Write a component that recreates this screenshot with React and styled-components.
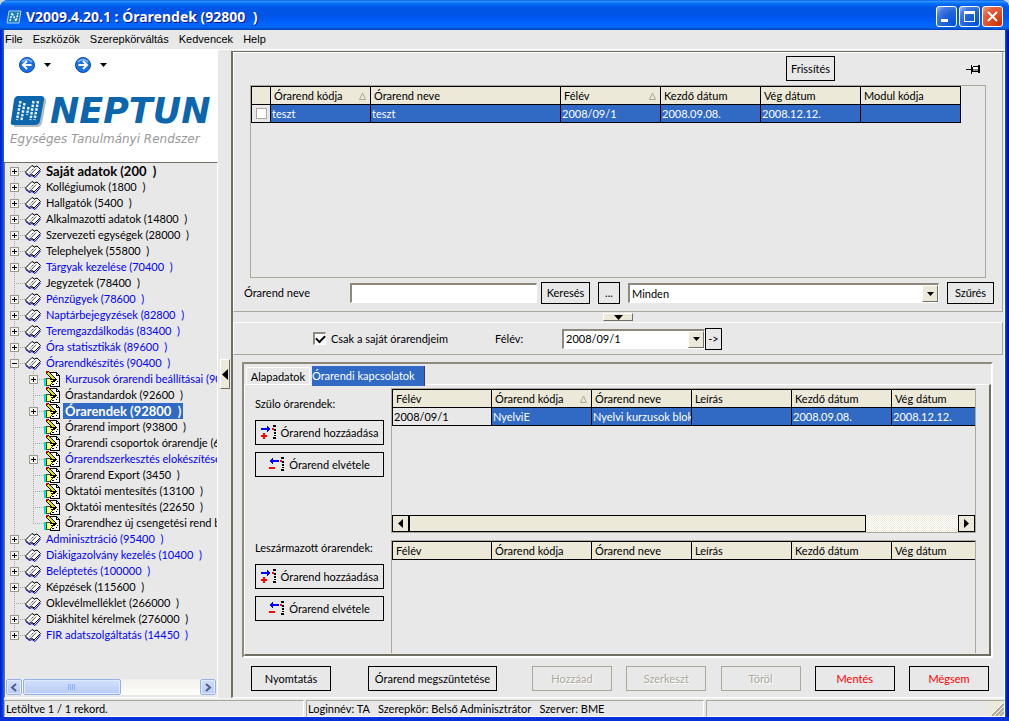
import styled, { createGlobalStyle, css } from "styled-components";

const GlobalStyle = createGlobalStyle`
    * {
        box-sizing: border-box;
    }
    body {
        margin: 0;
        background: #c9d6ea;
        color: #000;
        font-family: Lato, "Liberation Sans", sans-serif;
        font-size: 11px;
        line-height: 16px;
    }
    button, input, select {
        margin: 0;
        font: inherit;
        color: inherit;
    }
    svg {
        flex: none;
    }
`

const Window = styled.div`
    min-height: 100vh;
    display: flex;
    flex-direction: column;
    padding: 0 4px 4px;
    border-radius: 8px 8px 0 0;
    overflow: hidden;
    background: linear-gradient(90deg, #0019cf 0, #0831d9 2px, #0855dd 3px, #166aee 4px, #0855dd calc(100% - 4px), #0040dd calc(100% - 3px), #0019b0 calc(100% - 2px), #00138c 100%);
    box-shadow: inset 0 -4px 0 #0831d9;
`

const TitleBar = styled.header`
    height: 30px;
    margin: 0 -4px;
    padding: 3px 6px 0;
    display: flex;
    align-items: center;
    gap: 4px;
    background: linear-gradient(180deg, #0058ee 0, #3593ff 4%, #288eff 6%, #127dff 9%, #036ffc 12%, #0262ee 18%, #0057e5 24%, #0054e3 36%, #0055eb 56%, #005bf5 66%, #0066ff 80%, #0062ef 92%, #0040ab 100%);
    > h1 {
        flex: 1;
        margin: 0;
        color: #fff;
        font-family: "Noto Sans", sans-serif;
        font-size: 14px;
        line-height: 20px;
        font-weight: bold;
        text-shadow: 1px 1px 0 #0f1089;
        white-space: pre;
    }
`

const CaptionButtons = styled.div`
    display: flex;
    gap: 2px;
`

const CaptionButton = styled.button`
    width: 21px;
    height: 21px;
    padding: 0;
    display: flex;
    border: 1px solid #fff;
    border-radius: 3px;
    background: ${({ $close }) => $close
        ? "radial-gradient(circle at 90% 90%, #cc3300 0, #dc4a20 40%, #e0603c 70%, #eca08c 100%)"
        : "radial-gradient(circle at 90% 90%, #0054e9 0, #2263d5 50%, #4479e4 75%, #a3bbec 100%)"};
`

const MenuBar = styled.nav`
    height: 19px;
    padding: 0 1px 2px;
    display: flex;
    align-items: center;
    gap: 10px;
    background: #e8e8e8;
    font-family: "Liberation Sans", Arial, sans-serif;
    > a {
        color: #000;
        text-decoration: none;
    }
`

const Body = styled.div`
    flex: 1;
    display: flex;
    border-top: 1px solid #fff;
    background: #e8e8e8;
`

const Sidebar = styled.aside`
    width: 214px;
    flex: none;
    display: flex;
    flex-direction: column;
`

const Brand = styled.div`
    height: 112px;
    padding: 7px 6px 0 6px;
    background: #fff;
`

const NavButtons = styled.div`
    margin-left: 9px;
    display: flex;
    gap: 24px;
`

const NavButton = styled.button`
    padding: 0;
    display: flex;
    align-items: center;
    gap: 9px;
    border: none;
    background: none;
`

const Logo = styled.div`
    margin-top: 20px;
    display: flex;
    align-items: center;
    gap: 3px;
    height: 36px;
    color: #0b66ad;
    > strong {
        font-family: "DejaVu Sans", sans-serif;
        font-size: 35px;
        line-height: 36px;
        font-weight: bold;
        font-style: italic;
    }
`

const Slogan = styled.div`
    margin-top: 2px;
    color: #999;
    font-family: "DejaVu Sans", sans-serif;
    font-size: 12px;
    line-height: 16px;
    font-style: italic;
    white-space: nowrap;
`

const TreeBox = styled.div`
    flex: 1;
    display: flex;
    flex-direction: column;
    border: 1px solid #716f64;
    border-right-color: #fff;
    border-bottom-color: #fff;
    overflow: hidden;
`

const TreeList = styled.ul`
    flex: 1;
    margin: 0;
    padding: 0 0 0 1px;
    list-style: none;
    overflow: hidden;
`

const TreeRow = styled.li`
    height: 16px;
    display: flex;
    white-space: pre;
`

const dots = "#a8a8a0 0 1px, transparent 1px 2px"

const Guide = styled.span`
    flex: none;
    width: 19px;
    height: 16px;
    padding: 4px;
    background-repeat: no-repeat;
    background-image:
        repeating-linear-gradient(180deg, ${dots}),
        repeating-linear-gradient(90deg, ${dots});
    background-position: 8px ${({ $first }) => $first ? "8px" : "0"}, 8px 8px;
    background-size: 1px ${({ $last, $first }) => $last || $first ? "8px" : "16px"}, ${({ $pass }) => $pass ? "0" : "11px"} 1px;
`

const Expander = styled.button`
    display: flex;
    width: 9px;
    height: 9px;
    padding: 0;
    border: 1px solid #9d9a8c;
    background: #f4f4f0;
`

const TreeLabel = styled.span`
    margin-left: 3px;
    padding: 0 2px;
    color: ${({ $blue }) => $blue ? "#0000ff" : "#000"};
    ${({ $bold }) => $bold && css`
        font-size: 13px;
        font-weight: bold;
    `}
    ${({ $selected }) => $selected && css`
        color: #fff;
        background: #316ac5;
    `}
`

const XpScroll = styled.div`
    height: 16px;
    margin: 0 1px 2px;
    display: flex;
    gap: 1px;
    background: linear-gradient(180deg, #f3f1ec, #fefefb);
`

const XpScrollButton = styled.button`
    width: ${({ $wide }) => $wide ? "98px" : "16px"};
    margin-right: ${({ $wide }) => $wide ? "auto" : "0"};
    padding: 0;
    display: flex;
    align-items: center;
    justify-content: center;
    border: 1px solid #98b1e4;
    border-radius: 2px;
    background: linear-gradient(180deg, #d2dffd, #b9cbf6);
    box-shadow: inset 0 0 0 1px #e2eafe;
`

const SideSplitter = styled.div`
    width: 13px;
    flex: none;
    display: flex;
    align-items: center;
    justify-content: center;
`

const SplitterButton = styled.button`
    width: ${({ $down }) => $down ? "30px" : "10px"};
    height: ${({ $down }) => $down ? "8px" : "30px"};
    padding: 0;
    display: flex;
    align-items: center;
    justify-content: center;
    border: 1px solid #fff;
    border-right-color: #716f64;
    border-bottom-color: #716f64;
    background: #ece9d8;
`

const Main = styled.main`
    flex: 1;
    min-width: 0;
    margin-top: 1px;
    padding-right: 1px;
    display: flex;
    flex-direction: column;
    border: 1px solid #716f64;
    border-left-width: 2px;
    border-right-color: #fff;
    border-bottom-color: #fff;
`

const Panel = styled.section`
    border: 1px solid #fff;
    border-right-color: #aca899;
    border-bottom-color: #aca899;
`

const ListPanel = styled(Panel)`
    height: 260px;
    padding: 3px 8px 7px 10px;
    display: flex;
    flex-direction: column;
`

const PanelTools = styled.div`
    height: 25px;
    margin: 0 13px 4px 0;
    display: flex;
    justify-content: flex-end;
    align-items: center;
    gap: 131px;
`

const ListFrame = styled.div`
    flex: 1;
    margin: 0 8px 4px 6px;
    border: 1px solid #aca899;
    overflow: hidden;
`

const FlatButton = styled.button`
    width: ${({ $width }) => $width}px;
    height: ${({ $small }) => $small ? "22px" : "25px"};
    flex: none;
    padding: 0;
    display: flex;
    align-items: center;
    justify-content: center;
    gap: 4px;
    border: 1px solid #000;
    background: #e8e8e8;
    color: ${({ $red }) => $red ? "#ff0000" : "#000"};
    white-space: nowrap;
    &:disabled {
        border-color: #aca899;
        color: #aca899;
        text-shadow: 1px 1px 0 #fff;
    }
`

const PinButton = styled.button`
    padding: 0;
    display: flex;
    border: none;
    background: none;
`

const SearchRow = styled.div`
    display: flex;
    align-items: center;
    > label {
        width: 106px;
    }
    > button {
        margin-left: 8px;
    }
`

const TextInput = styled.input`
    width: 187px;
    height: 20px;
    margin-right: -4px;
    padding: 0 3px;
    border: 1px solid #fff;
    border-top: 2px solid #8d8a7d;
    border-left: 2px solid #8d8a7d;
    border-radius: 0;
    background: #fff;
`

const SelectFrame = styled.div`
    flex: ${({ $width }) => $width ? "none" : "1"};
    width: ${({ $width }) => $width ? `${$width}px` : "auto"};
    height: 20px;
    margin-left: ${({ $width }) => $width ? "0" : "8px"};
    display: flex;
    border: 1px solid #fff;
    border-top: 2px solid #8d8a7d;
    border-left: 2px solid #8d8a7d;
    background: #fff;
    > select {
        flex: 1;
        min-width: 0;
        padding: 0 2px;
        border: none;
        appearance: none;
        background: #fff;
    }
`

const SelectArrow = styled.span`
    width: 16px;
    display: flex;
    align-items: center;
    justify-content: center;
    border: 1px solid #fff;
    border-right-color: #716f64;
    border-bottom-color: #716f64;
    background: #ece9d8;
`

const DownSplitter = styled.div`
    height: 10px;
    display: flex;
    align-items: center;
    justify-content: center;
`

const FilterPanel = styled(Panel)`
    height: 33px;
    padding-left: 79px;
    display: flex;
    align-items: center;
`

const CheckLabel = styled.label`
    width: 182px;
    display: flex;
    align-items: center;
    gap: 5px;
    > input {
        width: 13px;
        height: 13px;
        display: grid;
        place-items: center;
        appearance: none;
        border: 1px solid #fff;
        border-top: 2px solid #8d8a7d;
        border-left: 2px solid #8d8a7d;
        background: #fff;
    }
    > input:checked::after {
        content: "";
        width: 7px;
        height: 4px;
        border-left: 2px solid #000;
        border-bottom: 2px solid #000;
        transform: translateY(-1px) rotate(-45deg);
    }
`

const FilterLabel = styled.label`
    width: 67px;
`

const TabBox = styled.section`
    flex: 1;
    margin: 7px 10px 0 9px;
    display: flex;
    flex-direction: column;
    border: 2px solid #fff;
    border-top-color: #8d8a7d;
    border-left-color: #8d8a7d;
`

const TabRow = styled.div`
    height: 20px;
    padding: 3px 0 0 2px;
    display: flex;
`

const Tab = styled.button`
    width: ${({ $width }) => $width}px;
    height: 17px;
    padding: 2px 0 0;
    border: 1px solid #fff;
    border-bottom: none;
    border-radius: 2px 2px 0 0;
    background: #e8e8e8;
    line-height: 14px;
    ${({ $active }) => $active && css`
        z-index: 1;
        height: 20px;
        margin: -1px 0 -2px 2px;
        padding: 0;
        border: none;
        border-right: 1px solid #404040;
        border-radius: 0;
        background: #316ac5;
        color: #fff;
        text-align: left;
    `}
`

const TabPage = styled.div`
    flex: 1;
    padding: 3px 13px 1px 10px;
    display: grid;
    grid-template-columns: 129px minmax(0, 1fr);
    grid-template-rows: 145px minmax(0, 1fr);
    gap: 7px;
    border: 1px solid #fff;
    border-right: 2px solid #716f64;
    border-bottom: 2px solid #716f64;
`

const SideActions = styled.div`
    padding-top: ${({ $top }) => $top ? "8px" : "0"};
    > h2 {
        margin: 0 0 8px;
        font-size: 11px;
        line-height: 16px;
        font-weight: normal;
    }
    > button + button {
        margin-top: 7px;
    }
`

const GridFrame = styled.div`
    display: flex;
    flex-direction: column;
    justify-content: space-between;
    border: 1px solid #aca899;
    border-bottom-width: ${({ $open }) => $open ? "0" : "1px"};
    overflow: hidden;
`

const DataTable = styled.table`
    width: ${({ $width }) => $width};
    table-layout: fixed;
    border-collapse: separate;
    border-spacing: 0;
    border-top: 1px solid #000;
    border-left: 1px solid #000;
    th, td {
        height: 18px;
        padding: 0 0 0 1px;
        border-right: 1px solid #000;
        border-bottom: 1px solid #000;
        line-height: 16px;
        font-weight: normal;
        text-align: left;
        white-space: nowrap;
        overflow: hidden;
    }
    th {
        padding-left: 3px;
        background: #ece9d8;
    }
    tr > :last-child {
        border-right-width: ${({ $cut }) => $cut ? "0" : "1px"};
    }
`

const HeadCell = styled.span`
    display: flex;
    justify-content: space-between;
    align-items: center;
    padding-right: 4px;
`

const Cell = styled.td`
    background: ${({ $selected }) => $selected ? "#316ac5" : "#e8e8e8"};
    color: ${({ $selected }) => $selected ? "#fff" : "#000"};
`

const RowCheck = styled.input`
    display: block;
    width: 11px;
    height: 11px;
    margin-left: 3px;
    appearance: none;
    border: 1px solid #aca899;
    background: #fff;
`

const FlatScroll = styled.div`
    height: 17px;
    display: flex;
    background: repeating-conic-gradient(#ece9d8 0 25%, #fff 0 50%) 0 0 / 2px 2px;
`

const FlatScrollButton = styled.button`
    width: 17px;
    padding: 0;
    display: flex;
    align-items: center;
    justify-content: center;
    border: 1px solid #000;
    background: #ece9d8;
`

const FlatThumb = styled.div`
    width: 457px;
    margin-right: auto;
    border: 1px solid #000;
    background: #ece9d8;
`

const Footer = styled.div`
    padding: 8px 14px 6px 18px;
    display: flex;
    gap: 37px;
`

const FooterGroup = styled.div`
    flex: 1;
    display: flex;
    justify-content: space-between;
    margin-left: -2px;
`

const StatusBar = styled.footer`
    height: 19px;
    padding-top: 1px;
    display: flex;
    gap: 2px;
    border-top: 1px solid #f4f4f4;
    background: #e8e8e8;
`

const StatusPart = styled.div`
    flex: ${({ $width }) => $width ? "none" : "1"};
    width: ${({ $width }) => $width}px;
    padding-left: 1px;
    display: flex;
    justify-content: ${({ $grip }) => $grip ? "flex-end" : "flex-start"};
    border: 1px solid #aca899;
    border-right-color: #fff;
    border-bottom-color: #fff;
    white-space: pre;
`

const Triangle = ({ dir, size = 4 }) => {
    const shapes = {
        down: `M0 0H${size * 2 - 1}L${size - 0.5} ${size}Z`,
        left: `M${size} 0V${size * 2 - 1}L0 ${size - 0.5}Z`,
        right: `M0 0V${size * 2 - 1}L${size} ${size - 0.5}Z`,
    };
    const flat = dir === "down";
    return <svg width={flat ? size * 2 - 1 : size} height={flat ? size : size * 2 - 1} aria-hidden="true">
        <path d={shapes[dir]} />
    </svg>;
};

const AppIcon = () => (
    <svg width="16" height="16" viewBox="0 0 16 16" aria-hidden="true">
        <path d="M3 2H15L13 14H1Z" fill="#1b7cc0" stroke="#a8d4f0" />
        <path d="M4 12L6 4L10 12L12 4" fill="none" stroke="#fff" strokeWidth="1.5" strokeDasharray="2 1" />
    </svg>
);

const LogoMark = () => (
    <svg width="37" height="32" viewBox="0 0 37 32" aria-hidden="true">
        <path d="M9 3H33Q37 3 36 7L32 28Q31 32 27 32H4Z" fill="#b8bcc0" />
        <path d="M8 1H31Q35 1 34 5L30 26Q29 30 25 30H3Q0 30 1 26L4 5Q5 1 8 1Z" fill="#0b66ad" />
        <g fill="none" stroke="#e4f1fa" strokeWidth="2.5" strokeDasharray="2.5 1.2">
            <path d="M10.5 6L7 25M14.5 8L11.5 25" />
            <path d="M18.5 12L17 20M23.5 6L20.5 25M28 6L24.5 25" />
        </g>
    </svg>
);

const RoundArrow = ({ forward }) => (
    <svg width="16" height="16" viewBox="0 0 16 16" aria-hidden="true">
        <circle cx="8" cy="8" r="7.5" fill="#1a70e8" stroke="#0a48a8" />
        <path d="M3 5Q8 0 13 5" fill="none" stroke="#6fb2f8" strokeWidth="2" />
        <path
            d={forward ? "M3.5 8H11.5M8 4L12 8L8 12" : "M12.5 8H4.5M8 4L4 8L8 12"}
            fill="none"
            stroke="#fff"
            strokeWidth="2"
        />
    </svg>
);

const BookIcon = () => (
    <svg width="16" height="16" viewBox="0 0 16 16" aria-hidden="true">
        <path d="M0.5 10.5L4.5 13.5L7 12.5L10 14.5L15.5 8" fill="none" stroke="#0000c0" />
        <path d="M0.5 9L7 2.5L9.5 4L12 3L15.5 6.5L9 13L6.5 11L4 12.5Z" fill="#fff" stroke="#000" />
        <path d="M9.5 4.5L4 10.5" fill="none" stroke="#000" strokeDasharray="1 1" />
        <path d="M11 5.5L6.5 10.5" fill="none" stroke="#555" />
    </svg>
);

const NoteIcon = () => (
    <svg width="16" height="16" viewBox="0 0 16 16" aria-hidden="true" shapeRendering="crispEdges">
        <path d="M6 1H12L15 4V15H6Z" fill="#fff" stroke="#000" />
        <path d="M12 1V4H15M8 13H10M12 12H13M11 8H13M13 10H14" fill="none" stroke="#000" />
        <path d="M0 7H2V15H0Z" fill="#00e0e0" />
        <path d="M2 7H6L9 9V11L6 14H2Z" fill="#ffff80" stroke="#4d4d00" />
        <path d="M3 1L12 10" stroke="#000" strokeWidth="4" />
        <path d="M3 1L11 9" stroke="#e8e000" strokeWidth="1.5" />
        <path d="M6 8H11V9H6ZM7 10H10V11H7Z" fill="#000" />
        <path d="M2 0H4V2H2Z" fill="#c00000" />
    </svg>
);

const MoveIcon = ({ remove }) => (
    <svg width="16" height="15" viewBox="0 0 16 15" aria-hidden="true" shapeRendering="crispEdges">
        <path d={remove ? "M0 4L4 1V3H10V5H4V7Z" : "M10 4L6 1V3H0V5H6V7Z"} fill="#0000ff" />
        <path d={remove ? "M0 10H6V12H0Z" : "M2 8H4V10H6V12H4V14H2V12H0V10H2Z"} fill="#ff0000" />
        <path d="M11 3H13V5H11Z" fill="#ff0000" />
        <path d="M12 0H15V2H12ZM13 4H15V6H13ZM13 7H15V9H13ZM13 10H15V11H13ZM12 12H15V14H12Z" />
    </svg>
);

const PinIcon = () => (
    <svg width="15" height="10" viewBox="0 0 15 10" aria-hidden="true" shapeRendering="crispEdges">
        <path d="M0 5H5V6H0ZM5 1H6V10H5ZM6 3H7V8H6ZM7 2H12V3H7ZM7 7H12V8H7ZM12 1H14V9H12Z" />
        <path d="M7 3H12V5H7Z" fill="#fff" />
        <path d="M7 5H12V7H7Z" fill="#888" />
    </svg>
);

const SortMark = () => (
    <svg width="7" height="8" viewBox="0 0 7 8" aria-hidden="true">
        <path d="M3.5 1L6.5 7.5H0.5Z" fill="none" stroke="#aca899" />
    </svg>
);

const GripIcon = () => (
    <svg width="15" height="15" viewBox="0 0 15 15" aria-hidden="true">
        <path d="M0 0H15V15H0Z" fill="#ece9d8" />
        <path d="M3 15L15 3M7 15L15 7M11 15L15 11" stroke="#aca899" strokeWidth="2" />
        <path d="M2 14L14 2M6 14L14 6" stroke="#fff" />
    </svg>
);

const tree = [
    { text: "Saját adatok (200  )", bold: true, first: true, box: "+" },
    { text: "Kollégiumok (1800  )", box: "+" },
    { text: "Hallgatók (5400  )", box: "+" },
    { text: "Alkalmazotti adatok (14800  )", box: "+" },
    { text: "Szervezeti egységek (28000  )", box: "+" },
    { text: "Telephelyek (55800  )", box: "+" },
    { text: "Tárgyak kezelése (70400  )", blue: true, box: "+" },
    { text: "Jegyzetek (78400  )" },
    { text: "Pénzügyek (78600  )", blue: true, box: "+" },
    { text: "Naptárbejegyzések (82800  )", blue: true, box: "+" },
    { text: "Teremgazdálkodás (83400  )", blue: true, box: "+" },
    { text: "Óra statisztikák (89600  )", blue: true, box: "+" },
    { text: "Órarendkészítés (90400  )", blue: true, box: "-" },
    { text: "Kurzusok órarendi beállításai (90", blue: true, child: true, box: "+" },
    { text: "Órastandardok (92600  )", child: true },
    { text: "Órarendek (92800  )", child: true, bold: true, selected: true, box: "+" },
    { text: "Órarend import (93800  )", child: true },
    { text: "Órarendi csoportok órarendje (65", child: true },
    { text: "Órarendszerkesztés elokészítése", blue: true, child: true, box: "+" },
    { text: "Órarend Export (3450  )", child: true },
    { text: "Oktatói mentesítés (13100  )", child: true },
    { text: "Oktatói mentesítés (22650  )", child: true },
    { text: "Órarendhez új csengetési rend b", child: true, last: true },
    { text: "Adminisztráció (95400  )", blue: true, box: "+" },
    { text: "Diákigazolvány kezelés (10400  )", blue: true, box: "+" },
    { text: "Beléptetés (100000  )", blue: true, box: "+" },
    { text: "Képzések (115600  )", box: "+" },
    { text: "Oklevélmelléklet (266000  )" },
    { text: "Diákhitel kérelmek (276000  )", box: "+" },
    { text: "FIR adatszolgáltatás (14450  )", blue: true, last: true, box: "+" },
];

const menu = ["File", "Eszközök", "Szerepkörváltás", "Kedvencek", "Help"];

const listColumns = [
    { title: "Órarend kódja", width: 100, sort: true },
    { title: "Órarend neve", width: 190 },
    { title: "Félév", width: 100, sort: true },
    { title: "Kezdő dátum", width: 100 },
    { title: "Vég dátum", width: 100 },
    { title: "Modul kódja", width: 100 },
];

const linkColumns = [
    { title: "Félév", width: 99 },
    { title: "Órarend kódja", width: 100, sort: true },
    { title: "Órarend neve", width: 100 },
    { title: "Leírás", width: 100 },
    { title: "Kezdő dátum", width: 100 },
    { title: "Vég dátum" },
];

const TreeItem = ({ item }) => (
    <TreeRow>
        {item.child && <Guide $pass />}
        <Guide $first={item.first} $last={item.last}>
            {item.box && <Expander aria-label={item.box === "+" ? "Kinyitás" : "Bezárás"}>
                <svg width="7" height="7" aria-hidden="true">
                    <path d={item.box === "+" ? "M1 3H6V4H1ZM3 1H4V6H3Z" : "M1 3H6V4H1Z"} shapeRendering="crispEdges" />
                </svg>
            </Expander>}
        </Guide>
        {item.child ? <NoteIcon /> : <BookIcon />}
        <TreeLabel $blue={item.blue} $bold={item.bold} $selected={item.selected}>{item.text}</TreeLabel>
    </TreeRow>
);

const HeadRow = ({ columns, sorted = true, children }) => (
    <thead>
        <tr>
            {children}
            {columns.map((col) => (
                <th key={col.title} style={{ width: col.width }}>
                    <HeadCell>{col.title}{sorted && col.sort && <SortMark />}</HeadCell>
                </th>
            ))}
        </tr>
    </thead>
);

const LinkActions = ({ title, top }) => (
    <SideActions $top={top}>
        <h2>{title}</h2>
        <FlatButton $width={129}><MoveIcon />Órarend hozzáadása</FlatButton>
        <FlatButton $width={129}><MoveIcon remove />Órarend elvétele</FlatButton>
    </SideActions>
);

const App = () => (
    <Window>
        <GlobalStyle />
        <TitleBar>
            <AppIcon />
            <h1>V2009.4.20.1 : Órarendek (92800  )</h1>
            <CaptionButtons>
                <CaptionButton aria-label="Kis méret">
                    <svg width="19" height="19"><path d="M4 12H11V15H4Z" fill="#fff" /></svg>
                </CaptionButton>
                <CaptionButton aria-label="Teljes méret">
                    <svg width="19" height="19"><path d="M4 4H15V15H4ZM5 7V14H14V7Z" fill="#fff" fillRule="evenodd" /></svg>
                </CaptionButton>
                <CaptionButton $close aria-label="Bezárás">
                    <svg width="19" height="19"><path d="M5 5L14 14M14 5L5 14" stroke="#fff" strokeWidth="2" /></svg>
                </CaptionButton>
            </CaptionButtons>
        </TitleBar>
        <MenuBar>
            {menu.map((name) => <a key={name} href="#">{name}</a>)}
        </MenuBar>
        <Body>
            <Sidebar>
                <Brand>
                    <NavButtons>
                        <NavButton aria-label="Vissza"><RoundArrow /><Triangle dir="down" /></NavButton>
                        <NavButton aria-label="Előre"><RoundArrow forward /><Triangle dir="down" /></NavButton>
                    </NavButtons>
                    <Logo><LogoMark /><strong>NEPTUN</strong></Logo>
                    <Slogan>Egységes Tanulmányi Rendszer</Slogan>
                </Brand>
                <TreeBox>
                    <TreeList>
                        {tree.map((item, i) => <TreeItem key={i} item={item} />)}
                    </TreeList>
                    <XpScroll>
                        <XpScrollButton aria-label="Balra">
                            <svg width="8" height="9"><path d="M6 1L2 4.5L6 8" fill="none" stroke="#4d6185" strokeWidth="2" /></svg>
                        </XpScrollButton>
                        <XpScrollButton $wide aria-label="Görgetés">
                            <svg width="8" height="6"><path d="M0 0H1V6H0ZM2 0H3V6H2ZM4 0H5V6H4ZM6 0H7V6H6Z" fill="#8cb0f8" /></svg>
                        </XpScrollButton>
                        <XpScrollButton aria-label="Jobbra">
                            <svg width="8" height="9"><path d="M2 1L6 4.5L2 8" fill="none" stroke="#4d6185" strokeWidth="2" /></svg>
                        </XpScrollButton>
                    </XpScroll>
                </TreeBox>
            </Sidebar>
            <SideSplitter>
                <SplitterButton aria-label="Oldalsáv elrejtése"><Triangle dir="left" size={6} /></SplitterButton>
            </SideSplitter>
            <Main>
                <ListPanel>
                    <PanelTools>
                        <FlatButton $width={49}>Frissítés</FlatButton>
                        <PinButton aria-label="Rögzítés"><PinIcon /></PinButton>
                    </PanelTools>
                    <ListFrame>
                        <DataTable $width="710px">
                            <HeadRow columns={listColumns}>
                                <th style={{ width: 19 }} aria-label="Kijelölés" />
                            </HeadRow>
                            <tbody>
                                <tr>
                                    <Cell><RowCheck type="checkbox" aria-label="teszt" /></Cell>
                                    {["teszt", "teszt", "2008/09/1", "2008.09.08.", "2008.12.12.", ""].map((value, i) => (
                                        <Cell key={i} $selected>{value}</Cell>
                                    ))}
                                </tr>
                            </tbody>
                        </DataTable>
                    </ListFrame>
                    <SearchRow>
                        <label htmlFor="name">Órarend neve</label>
                        <TextInput id="name" type="text" />
                        <FlatButton $small $width={49}>Keresés</FlatButton>
                        <FlatButton $small $width={22}>...</FlatButton>
                        <SelectFrame>
                            <select aria-label="Szűrő"><option>Minden</option></select>
                            <SelectArrow><Triangle dir="down" /></SelectArrow>
                        </SelectFrame>
                        <FlatButton $small $width={47}>Szűrés</FlatButton>
                    </SearchRow>
                </ListPanel>
                <DownSplitter>
                    <SplitterButton $down aria-label="Lista elrejtése"><Triangle dir="down" size={5} /></SplitterButton>
                </DownSplitter>
                <FilterPanel>
                    <CheckLabel>
                        <input type="checkbox" defaultChecked />
                        Csak a saját órarendjeim
                    </CheckLabel>
                    <FilterLabel htmlFor="term">Félév:</FilterLabel>
                    <SelectFrame $width={143}>
                        <select id="term"><option>2008/09/1</option></select>
                        <SelectArrow><Triangle dir="down" /></SelectArrow>
                    </SelectFrame>
                    <FlatButton $small $width={17}>-&gt;</FlatButton>
                </FilterPanel>
                <TabBox>
                    <TabRow>
                        <Tab $width={64}>Alapadatok</Tab>
                        <Tab $width={113} $active>Órarendi kapcsolatok</Tab>
                    </TabRow>
                    <TabPage>
                        <LinkActions top title="Szülo órarendek:" />
                        <GridFrame>
                            <DataTable $width="100%" $cut>
                                <HeadRow columns={linkColumns} />
                                <tbody>
                                    <tr>
                                        <Cell>2008/09/1</Cell>
                                        {["NyelviE", "Nyelvi kurzusok blok", "", "2008.09.08.", "2008.12.12."].map((value, i) => (
                                            <Cell key={i} $selected>{value}</Cell>
                                        ))}
                                    </tr>
                                </tbody>
                            </DataTable>
                            <FlatScroll>
                                <FlatScrollButton aria-label="Balra"><Triangle dir="left" size={5} /></FlatScrollButton>
                                <FlatThumb />
                                <FlatScrollButton aria-label="Jobbra"><Triangle dir="right" size={5} /></FlatScrollButton>
                            </FlatScroll>
                        </GridFrame>
                        <LinkActions title="Leszármazott órarendek:" />
                        <GridFrame $open>
                            <DataTable $width="100%" $cut>
                                <HeadRow columns={linkColumns} sorted={false} />
                            </DataTable>
                        </GridFrame>
                    </TabPage>
                </TabBox>
                <Footer>
                    <FlatButton $width={80}>Nyomtatás</FlatButton>
                    <FlatButton $width={129}>Órarend megszüntetése</FlatButton>
                    <FooterGroup>
                        <FlatButton $width={80} disabled>Hozzáad</FlatButton>
                        <FlatButton $width={80} disabled>Szerkeszt</FlatButton>
                        <FlatButton $width={80} disabled>Töröl</FlatButton>
                        <FlatButton $width={80} $red>Mentés</FlatButton>
                        <FlatButton $width={80} $red>Mégsem</FlatButton>
                    </FooterGroup>
                </Footer>
            </Main>
        </Body>
        <StatusBar>
            <StatusPart $width={300}>Letöltve 1 / 1 rekord.</StatusPart>
            <StatusPart $width={398}>Loginnév: TA   Szerepkör: Belső Adminisztrátor   Szerver: BME</StatusPart>
            <StatusPart $grip><GripIcon /></StatusPart>
        </StatusBar>
    </Window>
);

export default App;
